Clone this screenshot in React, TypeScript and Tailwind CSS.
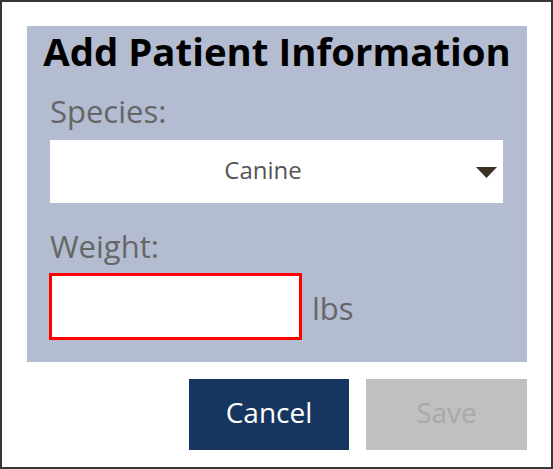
import React from "react";

export default function App() {
  const font = { fontFamily: '"Open Sans", "Noto Sans", sans-serif' };
  return (
    <div
      className="w-[553px] h-[469px] border-2 border-[#363636] bg-white box-border"
      style={font}
    >
      <div className="ml-[25px] mt-[24px] w-[500px] h-[336px] bg-[#b3bcd0] pt-[4px] pl-[23px] pr-[24px] flex flex-col">
        <h1 className="text-[38.4px] leading-[40px] font-bold text-black text-center -ml-[23px] -mr-[24px] mt-[1px]">
          Add Patient Information
        </h1>
        <div className="mt-[22px] text-[31px] leading-[36px] text-[#666666]">Species:</div>
        <div className="mt-[11px] h-[63px] bg-white flex items-center">
          <div className="flex-1 text-center text-[24px] text-[#555555] pb-[4px]">Canine</div>
          <svg width="21" height="11" viewBox="0 0 21 11" className="mr-[6px] mt-[2px]">
            <polygon points="0,0 21,0 10.5,11" fill="#3b3124" />
          </svg>
        </div>
        <div className="mt-[25px] text-[31px] leading-[36px] text-[#666666]">Weight:</div>
        <div className="mt-[9px] flex items-center -ml-px">
          <div className="w-[253px] h-[67px] bg-white border-[3px] border-[#ff0000] box-border" />
          <span className="ml-[10px] text-[31px] text-[#666666] mt-[3px]">lbs</span>
        </div>
      </div>
      <div className="mt-[17px] w-[525px] flex justify-end gap-[17px]">
        <button className="w-[160px] h-[71px] bg-[#17365f] text-white text-[28px] pb-[5px]">Cancel</button>
        <button className="w-[161px] h-[71px] bg-[#c0c0c0] text-[#a8a8a8] text-[28px] pb-[5px]">Save</button>
      </div>
    </div>
  );
}
